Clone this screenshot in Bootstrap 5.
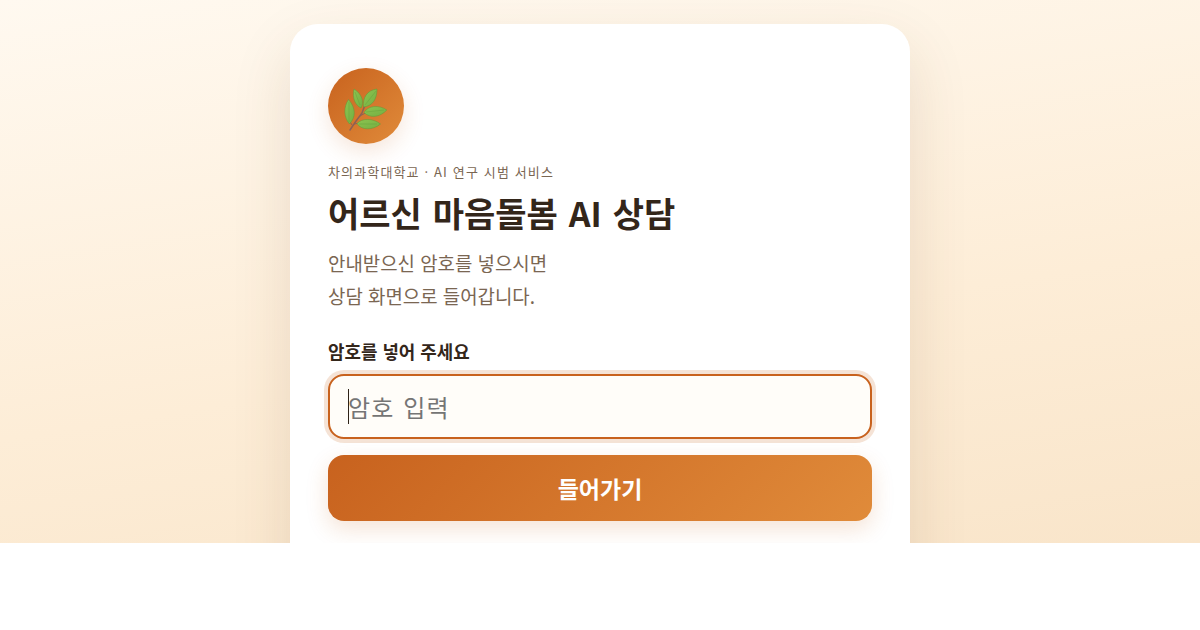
<!DOCTYPE html>
<html lang="ko">
<head>
<meta charset="utf-8">
<meta name="viewport" content="width=device-width, initial-scale=1">
<title>어르신 마음돌봄 AI 상담</title>
<link href="https://cdn.jsdelivr.net/npm/bootstrap@5.3.0/dist/css/bootstrap.min.css" rel="stylesheet">
<style>
html{background:#fff}
body{font-family:"Noto Sans CJK KR",sans-serif;background:#fff;color:#33261a;overflow:hidden}
.stage{height:543px;background:linear-gradient(171deg,#fff9f0 0%,#fdedd7 60%,#f9e5ca 100%)}
.gate{width:620px;height:640px;border-radius:28px;padding:44px 38px;box-shadow:0 24px 60px rgba(100,65,20,.13)}
.emblem{width:76px;height:76px;background:linear-gradient(135deg,#c8621e,#e08b3a);box-shadow:0 8px 22px rgba(200,98,30,.16)}
.org{font-size:13px;letter-spacing:1.14px;line-height:19px;color:#7a6652;margin-top:18px}
.title{font-size:34px;font-weight:700;line-height:46px;word-spacing:1.4px;margin-top:9px;color:#33261a}
.intro{font-size:18.9px;line-height:33px;color:#7a6652;margin-top:10px}
.ask{font-size:17.9px;font-weight:700;line-height:26px;margin-top:26px}
.code{height:65px;border:2px solid #c8621e;border-radius:16px;padding:0 18px;margin-top:10px;background:#fffdf9;box-shadow:0 0 0 4px rgba(200,98,30,.18);font-size:24px;letter-spacing:1.2px;word-spacing:.8px;color:#757575}
.caret{width:1px;height:35px;margin-right:-1px;background:#2e2318}
.enter{height:66px;border-radius:16px;background:linear-gradient(135deg,#c8621e,#e08b3a);font-size:23px;font-weight:700;color:#fff;box-shadow:0 8px 22px rgba(200,98,30,.18)}
</style>
</head>
<body>
<div class="stage overflow-hidden pt-4">
<main class="gate bg-white mx-auto">
<div class="emblem rounded-circle">
<svg width="76" height="76" viewBox="0 0 76 76" aria-hidden="true">
<defs><linearGradient id="leaf" x1="0" y1="0" x2="1" y2="1"><stop offset="0" stop-color="#8cc450"/><stop offset="1" stop-color="#74af42"/></linearGradient></defs>
<path d="M22 62Q27 54 34 45L37 37" fill="none" stroke="#8d6055" stroke-width="1.5" stroke-linecap="round"/>
<path d="M24 57l-3-5M26 56l6-1M32 48l7-4" fill="none" stroke="#8d6055" stroke-width="1"/>
<g fill="url(#leaf)" stroke="#5c9a38" stroke-width=".5">
<path d="M20.500 31.500C15.500 39 15.500 49 21.500 56C28 49 28 40 20.500 31.500Z"/>
<path d="M26 21C24 30 27 37 33 40C36.500 34 34 26 26 21Z"/>
<path d="M49 21C39 22 34.500 30 35.500 39C44 38 49 32 49 21Z"/>
<path d="M58.800 42C51 36.500 40 37.500 36 44.500C42 50.500 52 49.500 58.800 42Z"/>
<path d="M52.500 56C45 50 34 50 29 55.500C33 62.500 45 62.500 52.500 56Z"/>
</g>
<path d="M21 34v20M27 24l5 13M48 23L37 37M56 42L38 44M49 56L31 56" fill="none" stroke="#5c9a38" stroke-width=".6" opacity=".6"/>
</svg>
</div>
<div class="org">차의과학대학교 · AI 연구 시범 서비스</div>
<h1 class="title mb-0">어르신 마음돌봄 AI 상담</h1>
<p class="intro mb-0">안내받으신 암호를 넣으시면<br>상담 화면으로 들어갑니다.</p>
<div class="ask">암호를 넣어 주세요</div>
<div class="code d-flex align-items-center"><span class="caret"></span>암호 입력</div>
<button class="enter btn border-0 w-100 mt-3">들어가기</button>
</main>
</div>
<script src="https://cdn.jsdelivr.net/npm/bootstrap@5.3.0/dist/js/bootstrap.bundle.min.js"></script>
</body>
</html>
